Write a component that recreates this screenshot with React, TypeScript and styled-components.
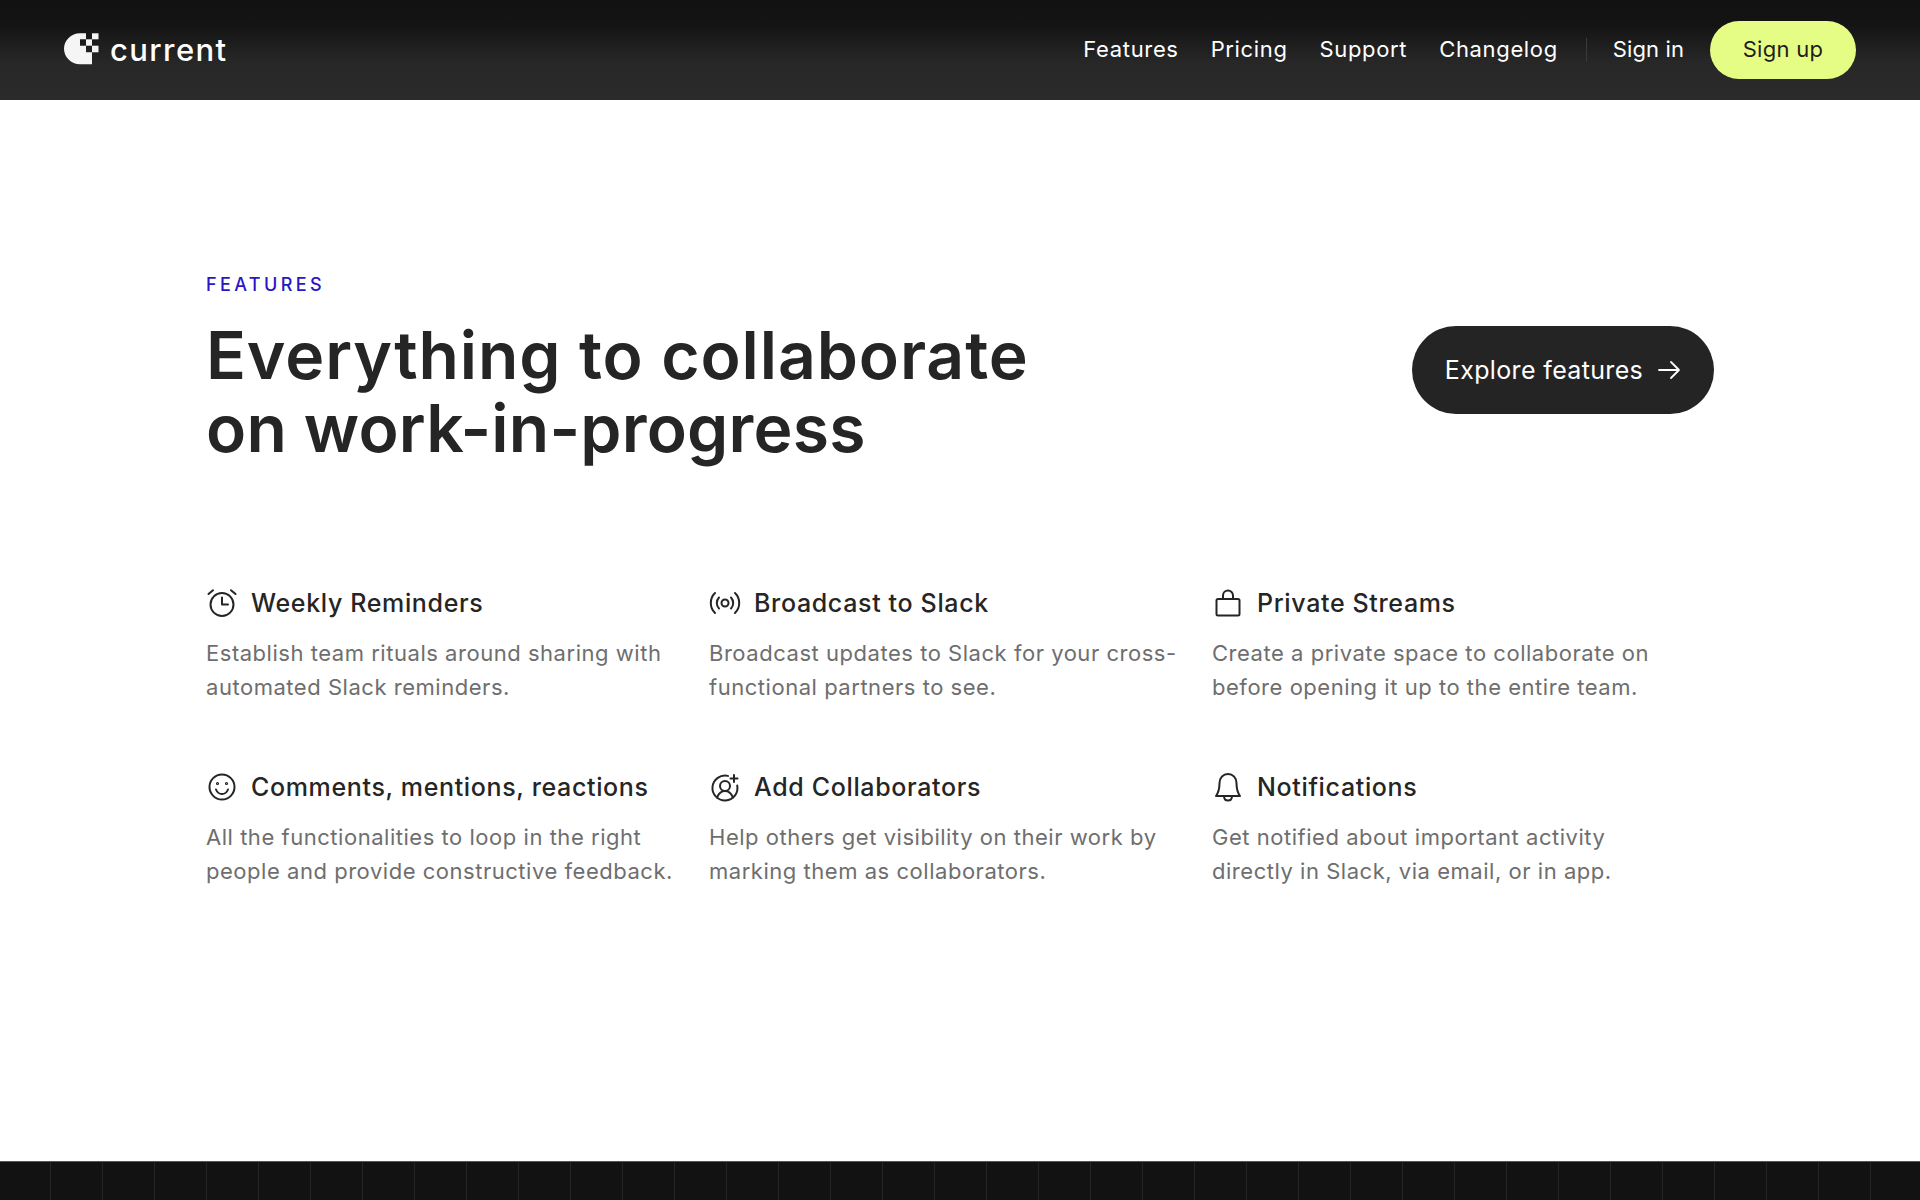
import React from "react";
import styled, { createGlobalStyle } from "styled-components";

const Global = createGlobalStyle`
  html, body { margin: 0; padding: 0; background: #fff; }
  body { font-family: Inter, "Liberation Sans", sans-serif; -webkit-font-smoothing: antialiased; }
  * { box-sizing: border-box; }
`;

const Page = styled.div`
  width: 1920px;
  height: 1200px;
  display: flex;
  flex-direction: column;
  overflow: hidden;
  background: #fff;
`;

const Header = styled.header`
  height: 100px;
  flex: none;
  display: flex;
  align-items: center;
  justify-content: space-between;
  padding: 0 64px;
  background: linear-gradient(180deg, #111 0%, #141414 25%, #272727 62%, #2b2b2b 100%);
`;

const Brand = styled.a`
  display: flex;
  align-items: center;
  gap: 11px;
  color: #fff;
  font-size: 31px;
  font-weight: 500;
  letter-spacing: 1.4px;
  line-height: 1;
  padding-bottom: 2px;
`;

const Nav = styled.nav`
  display: flex;
  align-items: center;
`;

const NavLink = styled.a<{ $spacing?: number; $gap?: number }>`
  color: #fff;
  font-size: 22px;
  font-weight: 400;
  letter-spacing: ${(p) => p.$spacing ?? 0.65}px;
  margin: 0 ${(p) => p.$gap ?? 32}px 2px 0;
`;

const Divider = styled.span`
  width: 1px;
  height: 24px;
  background: #3a3a3a;
  margin: 0 26px 0 -4px;
`;

const SignUp = styled.a`
  height: 58px;
  width: 146px;
  display: flex;
  align-items: center;
  justify-content: center;
  border-radius: 29px;
  background: #e6fd85;
  color: #1d1d1d;
  font-size: 22px;
  font-weight: 400;
  letter-spacing: 0.3px;
  margin-left: -6px;
  padding-bottom: 2px;
`;

const Main = styled.main`
  flex: 1;
  padding: 173px 206px 0;
`;

const Eyebrow = styled.div`
  color: #2a16c4;
  font-size: 18px;
  font-weight: 500;
  letter-spacing: 3.4px;
  line-height: 24px;
`;

const Hero = styled.div`
  display: flex;
  justify-content: space-between;
  align-items: flex-start;
  margin-top: 22px;
`;

const Heading = styled.h1`
  margin: 0;
  color: #252525;
  font-size: 66px;
  font-weight: 600;
  line-height: 73px;
`;

const HeadingLine = styled.span<{ $spacing: number }>`
  display: block;
  letter-spacing: ${(p) => p.$spacing}px;
`;

const Explore = styled.a`
  height: 88px;
  width: 302px;
  margin-top: 7px;
  display: flex;
  align-items: center;
  justify-content: center;
  gap: 14px;
  border-radius: 44px;
  background: #242424;
  color: #fff;
  font-size: 25px;
  font-weight: 400;
  letter-spacing: 0.35px;
`;

const Grid = styled.section`
  display: grid;
  grid-template-columns: repeat(3, 503px);
  grid-auto-rows: 184px;
  margin-top: 122px;
`;

const Feature = styled.article`
  display: flex;
  flex-direction: column;
`;

const FeatureHead = styled.div`
  display: flex;
  align-items: center;
  gap: 13px;
  height: 32px;
`;

const IconBox = styled.span`
  width: 32px;
  height: 32px;
  flex: none;
  color: #252525;
  display: flex;
  svg { display: block; }
`;

const FeatureTitle = styled.h3`
  margin: 0;
  color: #252525;
  font-size: 25px;
  font-weight: 500;
  letter-spacing: 0.65px;
`;

const FeatureText = styled.p`
  margin: 17px 0 0;
  color: #6e6e6e;
  font-size: 22px;
  font-weight: 400;
  line-height: 34px;
  letter-spacing: 0.53px;
  white-space: pre-line;
`;

const Footer = styled.footer`
  height: 39px;
  flex: none;
  border-top: 1px solid #555;
  background-color: #121212;
  background-image: repeating-linear-gradient(90deg, transparent 0 50px, #242424 50px 51px, transparent 51px 52px);
`;

const Svg: React.FC<{ children: React.ReactNode }> = ({ children }) => (
  <svg width="32" height="32" viewBox="0 0 32 32" fill="none" stroke="currentColor" strokeWidth="2" strokeLinecap="round" strokeLinejoin="round">
    {children}
  </svg>
);

const Logo = () => (
  <svg width="35" height="32" viewBox="0 0 35 32" fill="#f5f5f5">
    <path d="M16 .3H22V6.300H16V12.700H22V19.300H28V31.300H16C7 31.300 0 24 0 15.800S7 .3 16 .3Z" />
    <rect x="28" y=".3" width="6.500" height="6" />
    <rect x="22" y="6.300" width="6" height="6.400" />
    <rect x="28" y="12.700" width="6.500" height="6.600" />
  </svg>
);

const features = [
  { title: "Weekly Reminders", text: "Establish team rituals around sharing with\nautomated Slack reminders.", icon: (
    <Svg><circle cx="16" cy="17.500" r="11.500" /><path d="M16 10.500v7h6M2.500 7 7 3.200M29.500 7 25 3.200" /></Svg>
  ) },
  { title: "Broadcast to Slack", text: "Broadcast updates to Slack for your cross-\nfunctional partners to see.", icon: (
    <Svg><circle cx="16" cy="16" r="3.500" /><path d="M10 10.500a8 8 0 0 0 0 11M22 10.500a8 8 0 0 1 0 11M6 6a14 14 0 0 0 0 20M26 6a14 14 0 0 1 0 20" /></Svg>
  ) },
  { title: "Private Streams", text: "Create a private space to collaborate on\nbefore opening it up to the entire team.", icon: (
    <Svg><rect x="4.500" y="12" width="23" height="16.500" rx="1.500" /><path d="M11 12V8.500a5 5 0 0 1 10 0V12" /></Svg>
  ) },
  { title: "Comments, mentions, reactions", text: "All the functionalities to loop in the right\npeople and provide constructive feedback.", icon: (
    <Svg><circle cx="16" cy="16" r="12.500" /><path d="M10 18.500c1.200 3 3.500 4.500 6 4.500s4.800-1.500 6-4.500" /><circle cx="11.500" cy="12.500" r="0.600" /><circle cx="20.500" cy="12.500" r="0.600" /></Svg>
  ) },
  { title: "Add Collaborators", text: "Help others get visibility on their work by\nmarking them as collaborators.", icon: (
    <Svg><path d="M19 4.900A12.500 12.500 0 1 0 28.200 14.500" /><circle cx="16" cy="15" r="5" /><path d="M8 26.500c1.500-3.500 4.500-6.500 8-6.500s6.500 3 8 6.500M25 4v7M21.500 7.500h7" /></Svg>
  ) },
  { title: "Notifications", text: "Get notified about important activity\ndirectly in Slack, via email, or in app.", icon: (
    <Svg><path d="M16 3c-5 0-8.500 4-8.500 9 0 7-1 9.500-3.500 13h24c-2.500-3.500-3.500-6-3.500-13 0-5-3.500-9-8.500-9Z" /><path d="M12 25c0 3 1.800 4.500 4 4.500s4-1.500 4-4.500" /></Svg>
  ) },
];

const navItems = ["Features", "Pricing", "Support", "Changelog"];

export default function App() {
  return (
    <Page>
      <Global />
      <Header>
        <Brand><Logo />current</Brand>
        <Nav>
          {navItems.map((n) => <NavLink key={n}>{n}</NavLink>)}
          <Divider />
          <NavLink $spacing={0.1}>Sign in</NavLink>
          <SignUp>Sign up</SignUp>
        </Nav>
      </Header>
      <Main>
        <Eyebrow>FEATURES</Eyebrow>
        <Hero>
          <Heading>
            <HeadingLine $spacing={0.9}>Everything to collaborate</HeadingLine>
            <HeadingLine $spacing={0.2}>on work-in-progress</HeadingLine>
          </Heading>
          <Explore>
            Explore features
            <svg width="24" height="24" viewBox="0 0 24 24" fill="none" stroke="#fff" strokeWidth="1.800" strokeLinecap="round" strokeLinejoin="round">
              <path d="M2 12h20M14 4l8 8-8 8" />
            </svg>
          </Explore>
        </Hero>
        <Grid>
          {features.map((f) => (
            <Feature key={f.title}>
              <FeatureHead>
                <IconBox>{f.icon}</IconBox>
                <FeatureTitle>{f.title}</FeatureTitle>
              </FeatureHead>
              <FeatureText>{f.text}</FeatureText>
            </Feature>
          ))}
        </Grid>
      </Main>
      <Footer />
    </Page>
  );
}
